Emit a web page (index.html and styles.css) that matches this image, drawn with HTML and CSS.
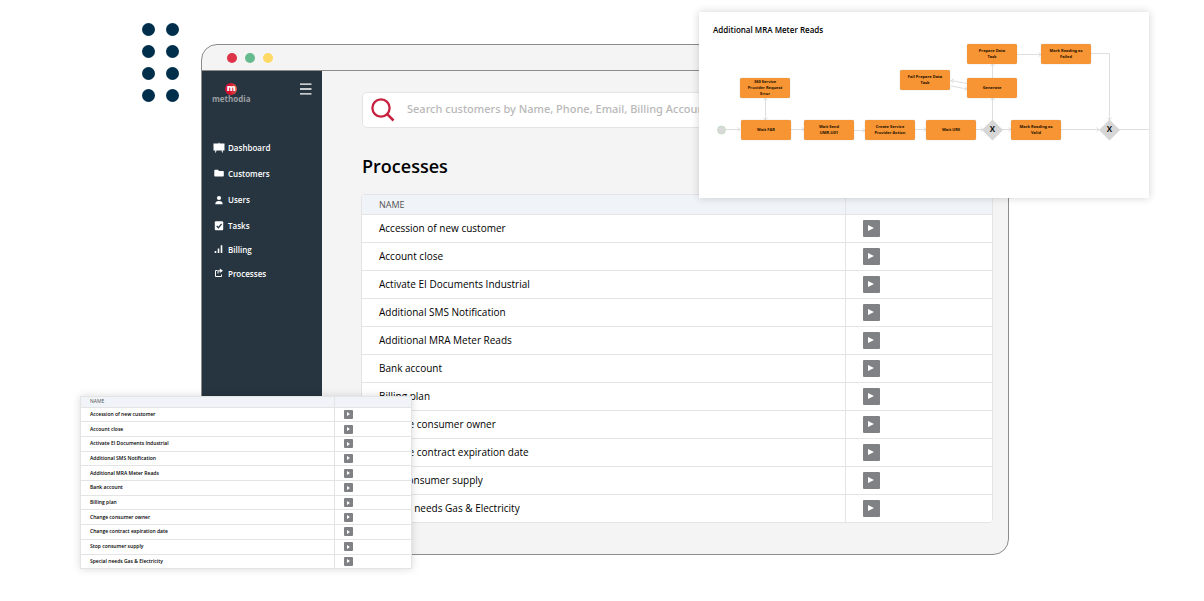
FILE: index.html
```
<!DOCTYPE html>
<html lang="en">
<head>
<meta charset="utf-8">
<title>Processes</title>
<link rel="stylesheet" href="styles.css">
</head>
<body>
<svg class="dots" width="38" height="80" viewBox="0 0 38 80" aria-hidden="true">
  <g fill="#002f4b">
    <circle cx="6.500" cy="6.500" r="6.500"/><circle cx="30.500" cy="6.500" r="6.500"/>
    <circle cx="6.500" cy="28.500" r="6.500"/><circle cx="30.500" cy="28.500" r="6.500"/>
    <circle cx="6.500" cy="50.500" r="6.500"/><circle cx="30.500" cy="50.500" r="6.500"/>
    <circle cx="6.500" cy="72.500" r="6.500"/><circle cx="30.500" cy="72.500" r="6.500"/>
  </g>
</svg>

<div class="browser">
  <div class="titlebar"><span class="light red"></span><span class="light green"></span><span class="light yellow"></span></div>
  <div class="app">
    <aside class="sidebar">
      <div class="brand-row">
        <div class="brand"><span class="brand-mark">m</span><span class="brand-name">methodia</span></div>
        <button class="menu" aria-label="Menu"><svg width="12" height="12" viewBox="0 0 12 12"><path d="M0 1.200H11.500M0 6H11.500M0 10.800H11.500" stroke="#fff" stroke-width="1.300"/></svg></button>
      </div>
      <nav class="nav">
        <div class="nav-main">
          <a href="#"><svg viewBox="0 0 12 12"><path fill="#fff" d="M.5 1.500H5.500V.8H6.500V1.500H11.500V8.500H9.600L10 10.500H9L8.600 8.500H3.400L3 10.500H2L2.400 8.500H.5Z"/></svg>Dashboard</a>
          <a href="#"><svg viewBox="0 0 12 12"><path fill="#fff" d="M1.300 2.500Q1.300 1.700 2.100 1.700H5L6.200 2.900H10Q10.800 2.900 10.800 3.700V7.800Q10.800 8.600 10 8.600H2.100Q1.300 8.600 1.300 7.800Z"/></svg>Customers</a>
          <a href="#"><svg viewBox="0 0 12 12"><g fill="#fff"><circle cx="6" cy="4" r="2.100"/><path d="M2.300 10.200Q2.300 7 6 7T9.700 10.200Z"/></g></svg>Users</a>
          <a href="#"><svg viewBox="0 0 12 12"><rect x="1.800" y="1.300" width="8.400" height="9" rx="1" fill="#fff"/><path d="M3.700 5.900L5.400 7.700L8.600 3.900" fill="none" stroke="#273540" stroke-width="1.300"/></svg>Tasks</a>
        </div>
        <div class="nav-more">
          <a href="#"><svg viewBox="0 0 12 12"><path d="M2.500 9V7M5.500 9V4.500M8.500 9V1.200" stroke="#fff" stroke-width="1.600"/></svg>Billing</a>
          <a href="#"><svg viewBox="0 0 12 12"><path d="M4.500 2.500H2.500V8.500H8.500V6.500M5 5.500V2.800H7.500" fill="none" stroke="#fff"/><path fill="#fff" d="M6.800 .5L10 2.800L6.800 5.100Z"/></svg>Processes</a>
        </div>
      </nav>
    </aside>
    <main class="content">
      <label class="search">
        <svg width="24" height="24" viewBox="0 0 24 24" aria-hidden="true"><circle cx="10" cy="10" r="8.600" fill="none" stroke="#c8203f" stroke-width="2.300"/><path d="M16.200 16.200L22.500 22.500" stroke="#c8203f" stroke-width="2.500"/></svg>
        <input type="text" aria-label="Search customers" placeholder="Search customers by Name, Phone, Email, Billing Account">
      </label>
      <h1>Processes</h1>
      <div class="table-frame">
        <table class="processes">
          <thead><tr><th>NAME</th><th></th></tr></thead>
          <tbody>
            <tr><td>Accession of new customer</td><td><button class="play" aria-label="Run"></button></td></tr>
            <tr><td>Account close</td><td><button class="play" aria-label="Run"></button></td></tr>
            <tr><td>Activate EI Documents Industrial</td><td><button class="play" aria-label="Run"></button></td></tr>
            <tr><td>Additional SMS Notification</td><td><button class="play" aria-label="Run"></button></td></tr>
            <tr><td>Additional MRA Meter Reads</td><td><button class="play" aria-label="Run"></button></td></tr>
            <tr><td>Bank account</td><td><button class="play" aria-label="Run"></button></td></tr>
            <tr><td>Billing plan</td><td><button class="play" aria-label="Run"></button></td></tr>
            <tr><td>Change consumer owner</td><td><button class="play" aria-label="Run"></button></td></tr>
            <tr><td>Change contract expiration date</td><td><button class="play" aria-label="Run"></button></td></tr>
            <tr><td>Stop consumer supply</td><td><button class="play" aria-label="Run"></button></td></tr>
            <tr><td>Special needs Gas &amp; Electricity</td><td><button class="play" aria-label="Run"></button></td></tr>
          </tbody>
        </table>
      </div>
    </main>
  </div>
</div>

<section class="diagram">
  <h2>Additional MRA Meter Reads</h2>
  <svg class="links" width="450" height="186" viewBox="0 0 450 186" aria-hidden="true">
    <defs><marker id="tip" viewBox="0 0 6 6" refX="5" refY="3" markerWidth="5" markerHeight="5" orient="auto-start-reverse"><path d="M2 .5L5 3L2 5.500" fill="none" stroke="#d9d9d9"/></marker></defs>
    <g fill="none" stroke="#dedede" marker-end="url(#tip)">
      <path d="M27 117.500H41"/><path d="M92 117.500H105"/><path d="M155 118.500H166"/><path d="M216 117.500H227"/><path d="M277 117.500H284"/>
      <path d="M303 117.500H312"/><path d="M362 117.500H400"/><path d="M293.500 108V86"/><path d="M293.500 66V52"/><path d="M318 42.500H342"/>
      <path d="M392 41.500H410.500V108"/><path d="M268 71.500L252 68.500"/><path d="M252 74L268 77"/>
      <path d="M66.500 108V86" marker-start="url(#tip)"/>
    </g>
    <path d="M420 117.500H450" stroke="#dedede"/>
    <circle cx="22.500" cy="118" r="4" fill="#d9d9d9" stroke="#b7dcb9" stroke-width=".7"/>
    <path d="M293.500 107.500L304 118L293.500 128.500L283 118ZM410.500 107.500L421 118L410.500 128.500L400 118Z" fill="#d6d6d6"/>
  </svg>
  <div class="node" style="left:41px;top:66px">360 Service<br>Provider Request<br>Error</div>
  <div class="node" style="left:42px;top:108px">Wait FAR</div>
  <div class="node" style="left:105px;top:108px">Wait Send<br>UMR-U01</div>
  <div class="node" style="left:166px;top:108px">Create Service<br>Provider Action</div>
  <div class="node" style="left:227px;top:108px">Wait URS</div>
  <div class="node" style="left:201px;top:58px">Fail Prepare Data<br>Task</div>
  <div class="node" style="left:268px;top:66px">Generate</div>
  <div class="node" style="left:268px;top:32px">Prepare Data<br>Task</div>
  <div class="node" style="left:342px;top:32px">Mark Reading as<br>Failed</div>
  <div class="node" style="left:312px;top:108px">Mark Reading as<br>Valid</div>
  <div class="gate" style="left:283px;top:107px">X</div>
  <div class="gate" style="left:400px;top:107px">X</div>
</section>

<section class="mini">
  <table class="processes">
    <thead><tr><th>NAME</th><th></th></tr></thead>
    <tbody>
      <tr><td>Accession of new customer</td><td><button class="play" aria-label="Run"></button></td></tr>
      <tr><td>Account close</td><td><button class="play" aria-label="Run"></button></td></tr>
      <tr><td>Activate EI Documents Industrial</td><td><button class="play" aria-label="Run"></button></td></tr>
      <tr><td>Additional SMS Notification</td><td><button class="play" aria-label="Run"></button></td></tr>
      <tr><td>Additional MRA Meter Reads</td><td><button class="play" aria-label="Run"></button></td></tr>
      <tr><td>Bank account</td><td><button class="play" aria-label="Run"></button></td></tr>
      <tr><td>Billing plan</td><td><button class="play" aria-label="Run"></button></td></tr>
      <tr><td>Change consumer owner</td><td><button class="play" aria-label="Run"></button></td></tr>
      <tr><td>Change contract expiration date</td><td><button class="play" aria-label="Run"></button></td></tr>
      <tr><td>Stop consumer supply</td><td><button class="play" aria-label="Run"></button></td></tr>
      <tr><td>Special needs Gas &amp; Electricity</td><td><button class="play" aria-label="Run"></button></td></tr>
    </tbody>
  </table>
</section>
</body>
</html>
```
FILE: styles.css
```
* { box-sizing: border-box; }
body {
  position: relative;
  margin: 0;
  padding: 44px 195px 46px 201px;
  background: #fff;
  color: #111;
  font-family: "Open Sans", "Noto Sans", sans-serif;
}
button { padding: 0; border: 0; background: none; }
.dots { position: absolute; left: 142px; top: 23px; }

.browser {
  overflow: hidden;
  border: 1px solid #8c8c8c;
  border-radius: 16px;
  background: #f4f4f4;
}
.titlebar {
  display: flex;
  align-items: center;
  gap: 8px;
  height: 26px;
  padding-left: 25px;
  border-bottom: 1px solid #8c8c8c;
}
.light { width: 10px; height: 10px; border-radius: 50%; }
.red { background: #dd3449; }
.green { background: #66bb8e; }
.yellow { background: #ffd966; }

.app { display: flex; }
.sidebar { width: 120px; flex: none; background: #273540; }
.brand-row {
  display: flex;
  justify-content: space-between;
  align-items: flex-start;
  padding: 12px 10px 0 10px;
}
.brand { display: flex; flex-direction: column; align-items: center; }
.brand-mark {
  width: 12px;
  height: 12px;
  border-radius: 50%;
  background: linear-gradient(90deg, #d8102c 40%, #d9604f);
  color: #fff;
  font-size: 9px;
  font-weight: 800;
  line-height: 10px;
  text-align: center;
}
.brand-name { color: #9b9fa3; font-size: 8px; font-weight: 700; line-height: 8px; }
.menu { line-height: 0; }
.nav { display: flex; flex-direction: column; gap: 8px; padding: 37px 0 0 11px; }
.nav-main, .nav-more { display: flex; flex-direction: column; }
.nav-main { gap: 10px; }
.nav-more { gap: 8px; }
.nav a {
  display: flex;
  align-items: center;
  gap: 3px;
  color: #fff;
  font-size: 8px;
  font-weight: 600;
  line-height: 16px;
  text-decoration: none;
}
.nav svg { width: 12px; height: 12px; }

.content { flex: 1; padding: 21px 15px 31px 39px; }
.search {
  display: flex;
  align-items: center;
  gap: 12px;
  height: 36px;
  margin-left: 1px;
  padding: 0 8px;
  border: 1px solid #e4e4e4;
  border-radius: 5px;
  background: #fff;
}
.search input {
  flex: 1;
  min-width: 0;
  padding: 0 0 2px;
  border: 0;
  outline: 0;
  background: none;
  font: 500 11px/20px "Noto Sans", "Open Sans", sans-serif;
}
.search input::placeholder { color: #b8b8b8; }
h1 { margin: 24px 0 14px 1px; font-size: 18px; font-weight: 600; line-height: 28px; color: #000; }
.table-frame { overflow: hidden; border: 1px solid #e4e4e4; border-radius: 4px; }

.processes { width: 100%; border-collapse: collapse; table-layout: fixed; background: #fff; }
.processes th, .processes td { height: 28px; padding: 0 17px; text-align: left; font-size: 10px; font-weight: 500; line-height: 14px; color: #000; border-bottom: 1px solid #e4e4e4; }
.processes th { height: 19px; padding-top: 2px; background: #f0f4f8; color: #555; font-size: 9px; }
.processes th:last-child, .processes td:last-child { width: 147px; border-left: 1px solid #e4e4e4; }
.processes tbody tr:last-child td { border-bottom: 0; }
.play {
  display: flex;
  align-items: center;
  justify-content: center;
  width: 17px;
  height: 17px;
  border-radius: 1px;
  background: #808184;
}
.play::before { content: ""; border-left: 6px solid #fff; border-top: 3px solid transparent; border-bottom: 3px solid transparent; }

.diagram {
  position: absolute;
  top: 12px;
  right: 55px;
  width: 450px;
  height: 186px;
  background: #fff;
  box-shadow: 0 0 8px rgba(0, 0, 0, .18);
}
.diagram h2 { margin: 12px 14px; font-size: 8px; font-weight: 600; line-height: 12px; color: #000; }
.links { position: absolute; left: 0; top: 0; }
.node {
  position: absolute;
  display: flex;
  align-items: center;
  justify-content: center;
  width: 50px;
  height: 20px;
  border-radius: 2px;
  box-shadow: 0 0 1px #999;
  background: #f79433;
  color: #221000;
  font-size: 4px;
  font-weight: 700;
  line-height: 6px;
  text-align: center;
}
.gate { position: absolute; width: 21px; font-size: 8px; font-weight: 700; line-height: 20px; text-align: center; }

.mini { position: absolute; left: 80px; top: 396px; width: 332px; border: 1px solid #e4e4e4; box-shadow: 0 0 8px rgba(0, 0, 0, .15); }
.mini .processes { height: 171px; }
.mini .processes th, .mini .processes td { height: auto; padding: 0 9px; font-size: 5px; font-weight: 600; line-height: 7px; }
.mini .processes th { height: 10px; font-weight: 500; }
.mini .processes th:last-child, .mini .processes td:last-child { width: 77px; }
.mini .play { width: 9px; height: 9px; }
.mini .play::before { border-width: 2px 0 2px 3px; }
```
